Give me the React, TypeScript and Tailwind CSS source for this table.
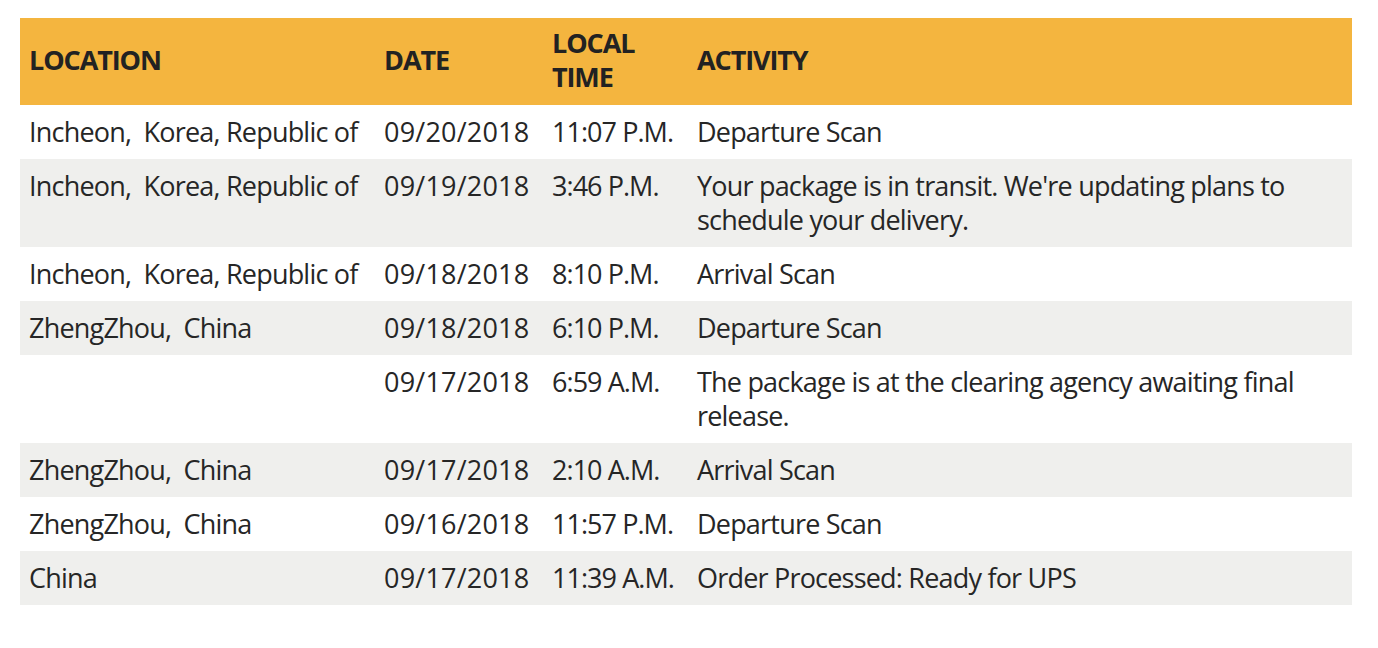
const rows = [
  { loc: "Incheon,  Korea, Republic of", date: "09/20/2018", time: "11:07 P.M.", act: "Departure Scan" },
  { loc: "Incheon,  Korea, Republic of", date: "09/19/2018", time: "3:46 P.M.", act: "Your package is in transit. We're updating plans to schedule your delivery." },
  { loc: "Incheon,  Korea, Republic of", date: "09/18/2018", time: "8:10 P.M.", act: "Arrival Scan" },
  { loc: "ZhengZhou,  China", date: "09/18/2018", time: "6:10 P.M.", act: "Departure Scan" },
  { loc: "", date: "09/17/2018", time: "6:59 A.M.", act: "The package is at the clearing agency awaiting final release." },
  { loc: "ZhengZhou,  China", date: "09/17/2018", time: "2:10 A.M.", act: "Arrival Scan" },
  { loc: "ZhengZhou,  China", date: "09/16/2018", time: "11:57 P.M.", act: "Departure Scan" },
  { loc: "China", date: "09/17/2018", time: "11:39 A.M.", act: "Order Processed: Ready for UPS" },
];

export default function App() {
  return (
    <div className="min-h-[648px] bg-white px-5 pt-[18px] font-['Open_Sans',sans-serif] text-[#222]">
      <table className="w-[1332px] table-fixed border-collapse">
        <colgroup>
          <col className="w-[355px]" />
          <col className="w-[168px]" />
          <col className="w-[145px]" />
          <col />
        </colgroup>
        <thead>
          <tr className="h-[87px] bg-[#f4b53f] text-left text-[27px] font-bold leading-[34px] tracking-[-1.1px] uppercase">
            <th className="pl-[9px] pr-2.5 pb-1 align-middle">Location</th>
            <th className="pl-[9px] pr-2.5 pb-1 align-middle">Date</th>
            <th className="pl-[9px] pr-2.5 pb-1 align-middle">Local<br />Time</th>
            <th className="pl-[9px] pr-2.5 pb-1 align-middle">Activity</th>
          </tr>
        </thead>
        <tbody className="text-[27px] leading-[34px] tracking-[-0.8px] text-[#262626]">
          {rows.map((r, i) => (
            <tr key={i} className={i % 2 ? "bg-[#efefed]" : "bg-white"}>
              <td className="pl-[9px] pr-2.5 pt-[10px] pb-[10px] align-top whitespace-pre">{r.loc}</td>
              <td className="pl-[9px] pr-2.5 pt-[10px] pb-[10px] align-top tracking-[0.2px]">{r.date}</td>
              <td className="pl-[9px] pr-2.5 pt-[10px] pb-[10px] align-top tracking-[-0.95px]">{r.time}</td>
              <td className="pl-[9px] pr-2.5 pt-[10px] pb-[10px] align-top">{r.act}</td>
            </tr>
          ))}
        </tbody>
      </table>
    </div>
  );
}
